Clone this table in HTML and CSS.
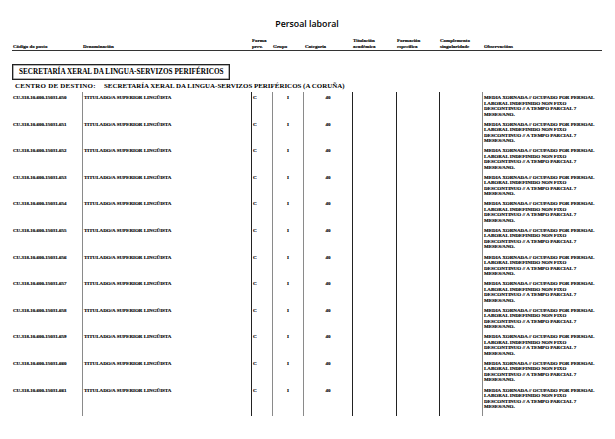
FILE: index.html
```html
<!DOCTYPE html>
<html lang="gl">
<head>
<meta charset="utf-8">
<title>Persoal laboral</title>
<link rel="stylesheet" href="styles.css">
</head>
<body>
<div class="page">
  <h1 class="title">Persoal laboral</h1>
  <div class="head">
    <div class="h">Código do posto</div>
    <div class="h">Denominación</div>
    <div class="h">Forma<br>prev.</div>
    <div class="h">Grupo</div>
    <div class="h">Categoría</div>
    <div class="h">Titulación<br>académica</div>
    <div class="h">Formación<br>específica</div>
    <div class="h">Complemento<br>singularidade</div>
    <div class="h">Observacións</div>
  </div>
  <div class="section"><span class="secbox">SECRETARÍA XERAL DA LINGUA-SERVIZOS PERIFÉRICOS</span></div>
  <div class="centro"><span class="clabel">CENTRO DE DESTINO:</span><span class="cval">SECRETARÍA XERAL DA LINGUA-SERVIZOS PERIFÉRICOS (A CORUÑA)</span></div>
  <div class="body" id="body"></div>
</div>
<script src="app.js"></script>
</body>
</html>
```

FILE: app.js
```js
var body = document.getElementById('body');
var html = '';
for (var i = 650; i <= 661; i++) {
  html += '<div class="row">' +
    '<div class="c code">CU.318.10.600.15031.' + i + '</div>' +
    '<div class="c den l-g">TITULADO/A SUPERIOR LINGÜISTA</div>' +
    '<div class="c forma l-k">C</div>' +
    '<div class="c grupo l-g">I</div>' +
    '<div class="c cat l-g">40</div>' +
    '<div class="c l-k"></div>' +
    '<div class="c l-k"></div>' +
    '<div class="c l-k"></div>' +
    '<div class="c obs l-g">MEDIA XORNADA // OCUPADO POR PERSOAL LABORAL INDEFINIDO NON FIXO DESCONTINUO // A TEMPO PARCIAL 7 MESES/ANO.</div>' +
    '</div>';
}
body.innerHTML = html;
```

FILE: styles.css
```css
html, body {
  margin: 0;
  padding: 0;
  background: #fff;
}
.page {
  width: 615px;
  height: 439px;
  overflow: hidden;
  padding: 0 13px 0 12px;
  box-sizing: border-box;
  font-family: "Liberation Serif", "Times New Roman", serif;
  color: #000;
}
.title {
  margin: 0;
  padding-top: 18px;
  height: 12px;
  line-height: 12px;
  text-align: center;
  font-family: "Open Sans", "Liberation Sans", sans-serif;
  font-weight: 600;
  font-size: 8.8px;
}
.head, .row {
  display: grid;
  grid-template-columns: 70px 169px 21px 31px 49px 44px 43px 43px 1fr;
}
.head {
  margin-top: 8px;
  border-bottom: 1px solid #333;
  align-items: end;
  padding-bottom: 1px;
}
.h {
  font-size: 5px;
  line-height: 5.5px;
  font-weight: bold;
  padding-left: 1px;
  -webkit-text-stroke: 0.15px #000;
}
.h:nth-child(5) { padding-left: 2px; }
.h:nth-child(9) { padding-left: 2px; }
.section {
  margin-top: 9px;
  height: 16px;
}
.secbox {
  display: inline-block;
  box-sizing: border-box;
  height: 16px;
  border: 1px solid #222;
  box-shadow: inset 0 0 0 0.5px #666;
  padding: 0 5px 0 6px;
  font-size: 7.2px;
  line-height: 14px;
  font-weight: bold;
}
.centro {
  margin-top: 4px;
  padding-left: 3px;
  height: 12px;
  line-height: 12px;
  font-size: 6.95px;
  font-weight: bold;
}
.clabel {
  display: inline-block;
  width: 89px;
  letter-spacing: 0.25px;
}
.row {
  height: 26.6px;
}
.row:last-child {
  height: 31px;
}
.c {
  font-size: 5px;
  line-height: 5.5px;
  font-weight: bold;
  padding-top: 3px;
  box-sizing: border-box;
  -webkit-text-stroke: 0.15px #000;
}
.l-g { border-left: 1px solid #8a8a8a; }
.l-k { border-left: 1px solid #222; }
.code { padding-left: 1px; }
.den { padding-left: 1px; }
.forma { padding-left: 1px; }
.grupo, .cat { text-align: center; }
.obs {
  padding-left: 1px;
  padding-right: 4px;
}
```
